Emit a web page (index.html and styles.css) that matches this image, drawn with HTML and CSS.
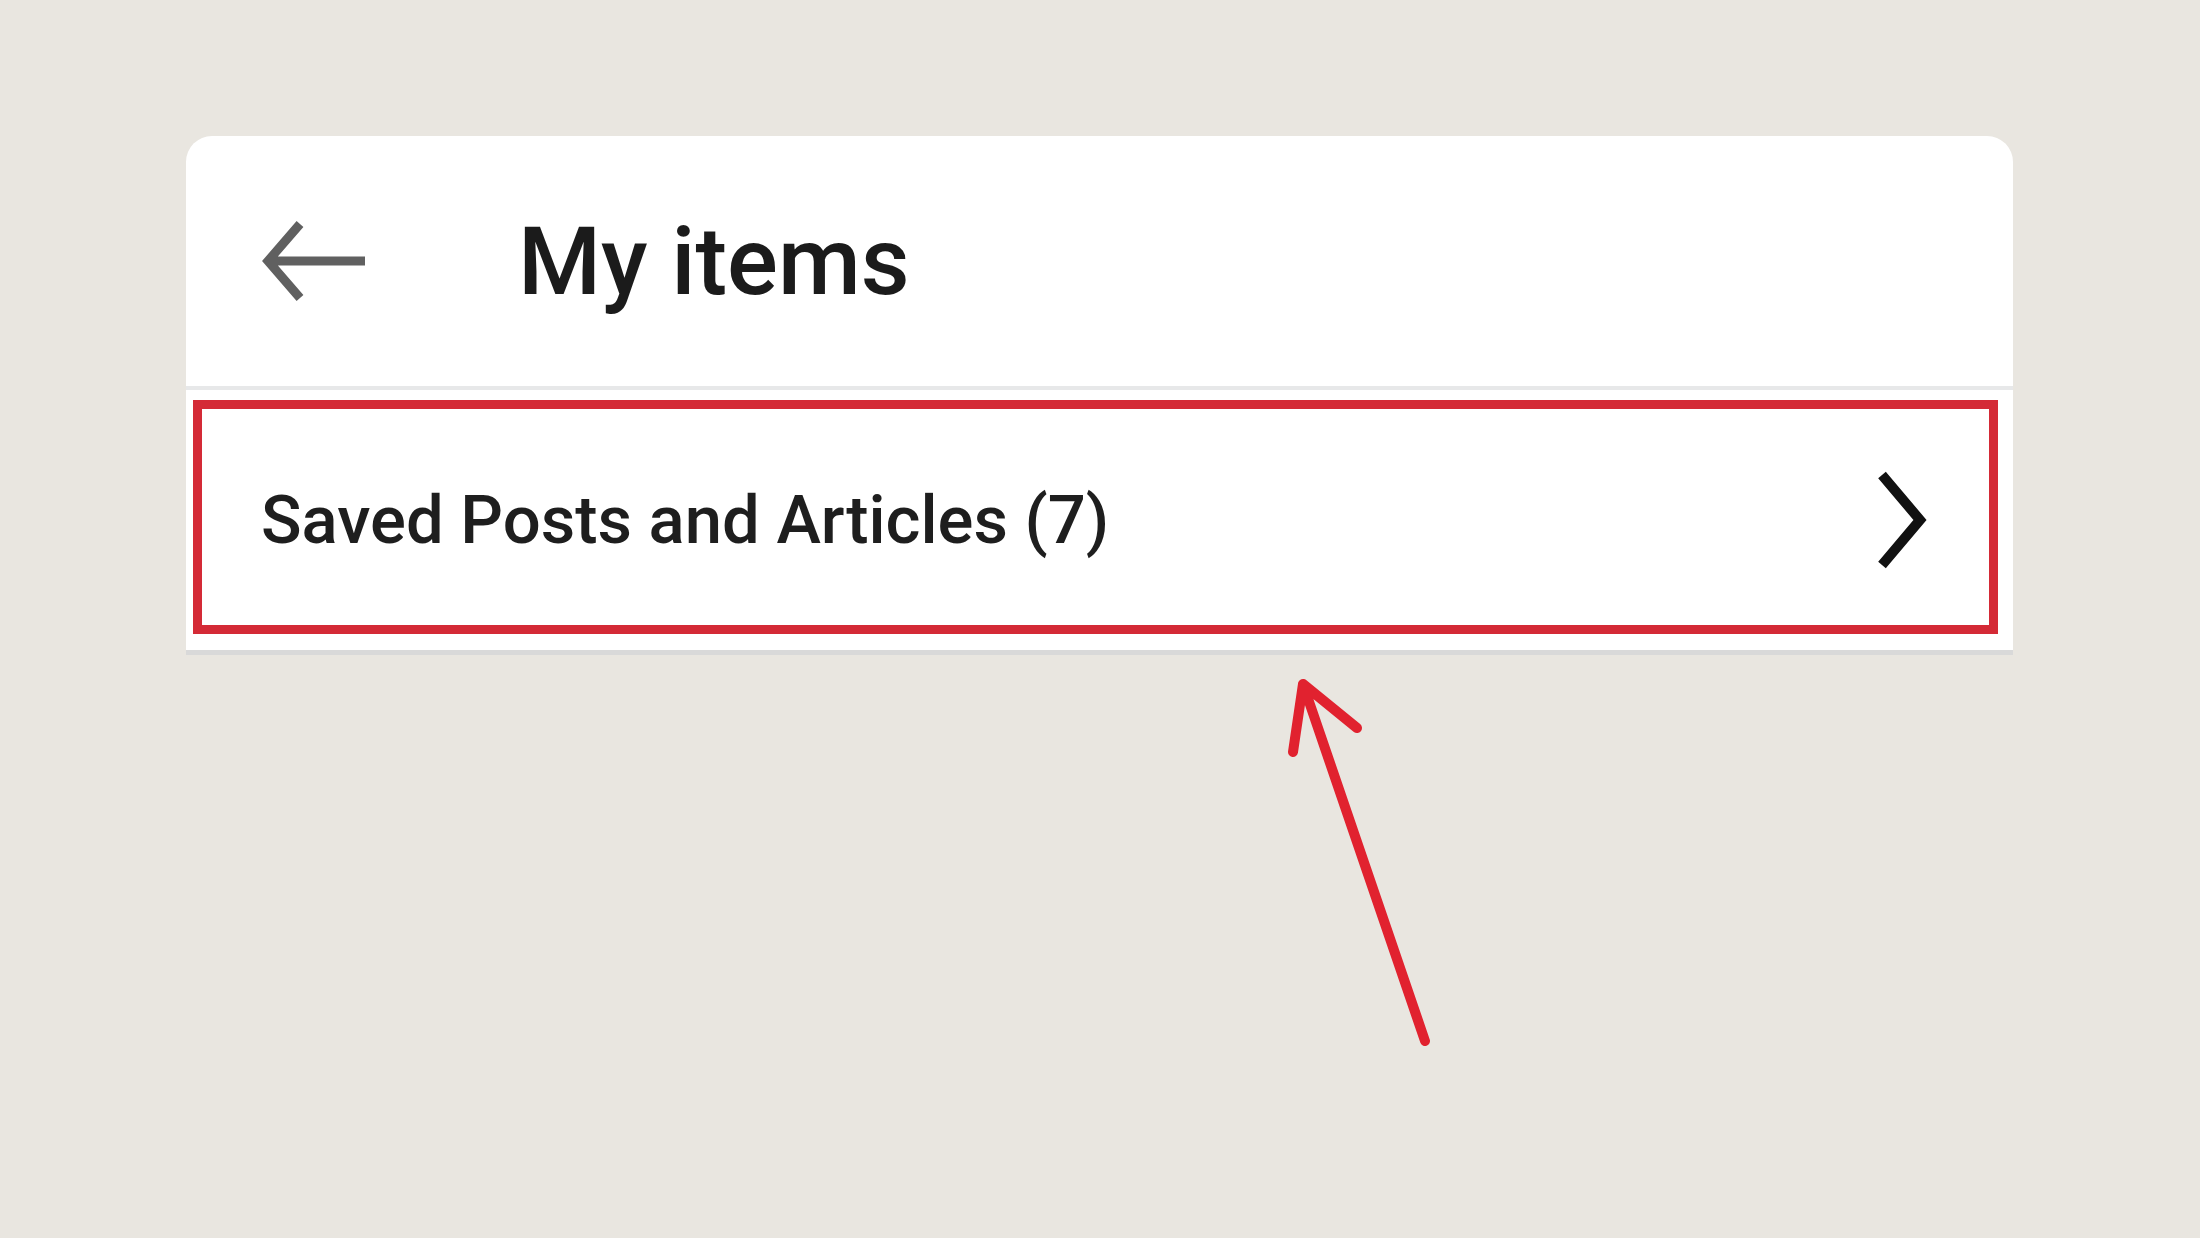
FILE: index.html
```html
<!DOCTYPE html>
<html lang="en">
<head>
<meta charset="utf-8">
<title>My items</title>
<link rel="stylesheet" href="styles.css">
</head>
<body>
<div class="page">
  <div class="card">
    <header class="card-header">
      <svg class="back-icon" width="110" height="84" viewBox="0 0 110 84" aria-hidden="true">
        <path d="M38 5 L6 42 L38 79 M6 42 H103" fill="none" stroke="#606060" stroke-width="9" stroke-linejoin="miter"/>
      </svg>
      <h1 class="title">My items</h1>
    </header>
    <div class="list">
      <div class="list-row">
        <span class="row-label">Saved Posts and Articles (7)</span>
        <svg class="chevron" width="56" height="100" viewBox="0 0 56 100" aria-hidden="true">
          <path d="M7 5 L45 50 L7 95" fill="none" stroke="#111111" stroke-width="10" stroke-linejoin="miter"/>
        </svg>
        <div class="highlight"></div>
      </div>
    </div>
  </div>
  <svg class="annotation" width="2200" height="1238" viewBox="0 0 2200 1238" aria-hidden="true">
    <path d="M1425 1041 L1303 684 M1293 752 L1303 684 L1357 728" fill="none" stroke="#e1222f" stroke-width="10" stroke-linecap="round" stroke-linejoin="round"/>
  </svg>
</div>
</body>
</html>
```

FILE: styles.css
```css
html, body {
  margin: 0;
  padding: 0;
}

body {
  background: #e9e6e0;
  font-family: Roboto, "Liberation Sans", Arial, sans-serif;
  width: 2200px;
  height: 1238px;
  overflow: hidden;
}

.page {
  position: relative;
  width: 2200px;
  height: 1238px;
  padding: 136px 0 0 186px;
  box-sizing: border-box;
}

.card {
  width: 1827px;
  background: #ffffff;
  border-radius: 26px 26px 0 0;
}

.card-header {
  height: 250px;
  display: flex;
  align-items: center;
  padding-left: 76px;
  border-bottom: 4px solid #e7e8e9;
}

.back-icon {
  display: block;
  flex: none;
}

.title {
  margin: 0 0 0 146px;
  font-size: 95px;
  font-weight: 500;
  color: #1b1b1b;
  line-height: 1;
  letter-spacing: 0;
}

.list {
  border-bottom: 5px solid #d9d9d9;
}

.list-row {
  position: relative;
  height: 260px;
  display: flex;
  align-items: center;
  justify-content: space-between;
  padding: 0 82px 0 75px;
}

.row-label {
  font-size: 67px;
  font-weight: 500;
  color: #1e1e1e;
  line-height: 1;
}

.chevron {
  display: block;
  flex: none;
}

.highlight {
  position: absolute;
  left: 7px;
  right: 15px;
  top: 10px;
  bottom: 16px;
  border: 9px solid #d42a36;
  pointer-events: none;
}

.annotation {
  position: absolute;
  left: 0;
  top: 0;
  pointer-events: none;
}
```
